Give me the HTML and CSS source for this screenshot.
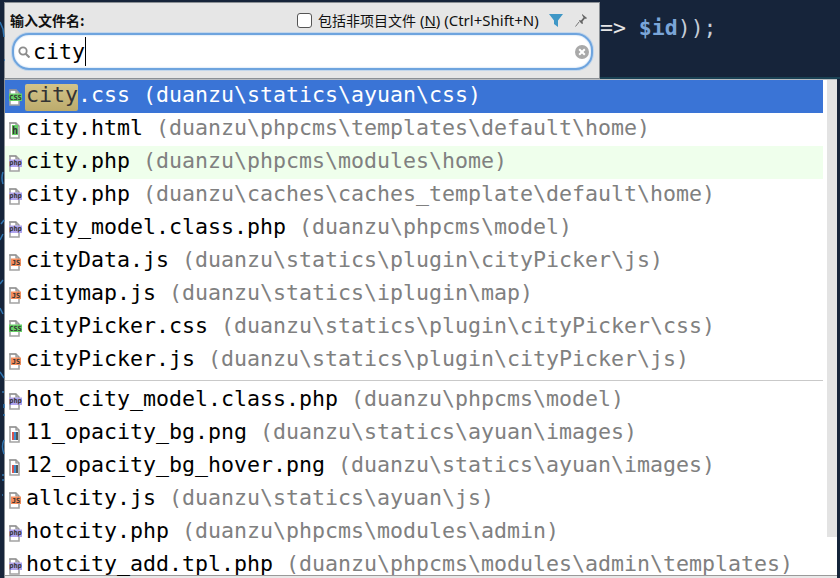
FILE: index.html
```html
<!DOCTYPE html>
<html lang="zh">
<head>
<meta charset="utf-8">
<title>输入文件名</title>
<link rel="stylesheet" href="styles.css">
</head>
<body>
<svg class="defs" width="0" height="0">
  <symbol id="page" viewBox="0 0 14 18"><path d="M1 2h6l3 3v12H1z" fill="#fff" stroke="#a3a3a3" stroke-width="1.600"/><path d="M.2 2h7M7 2v3h3" fill="none" stroke="#8b8b8b" stroke-width="1.200"/></symbol>
</svg>
<svg class="edge" width="5" height="578" viewBox="0 0 5 578"><path d="M0 22l3 7 1 8M4 60h1M3 172q-2 6 0 12M1 224l3-4M0 240l3-6M3 280l-3 4M0 308l3 6M0 372l4 6M2 392h2M4 404v4M4 414v2M4 440q-3 6 0 14M2 475h2M2 480h2M2 495h1" fill="none" stroke="#2f74b0" stroke-width="1.500"/></svg>
<div class="top">
  <div class="panel">
    <div class="panel-head">
      <span class="label">输入文件名:</span>
      <span class="check"></span>
      <span class="opt"><span class="cn">包括非项目文件</span> (<u>N</u>) (Ctrl+Shift+N)</span>
      <svg class="filter" width="14" height="13" viewBox="0 0 14 13"><path d="M0 0h14L9 6.500V13L5 10V6.500z" fill="#3f97c6"/></svg>
      <svg class="pin" width="12" height="13" viewBox="0 0 12 13"><path d="M7 0l5 4-1 1-1-.5-2.500 3 .5 2-1 .5-3-3 .5-1 1.500.5 2.500-3-1.500-2.500z" fill="#666"/><path d="M4 8l-3.500 4.500" stroke="#777" stroke-width="1"/></svg>
    </div>
    <div class="field">
      <svg class="lens" width="12" height="12" viewBox="0 0 12 12"><circle cx="5" cy="5" r="3.700" fill="none" stroke="#8c8c8c" stroke-width="1.800"/><path d="M7.500 7.500L11.500 11.500" stroke="#8c8c8c" stroke-width="2.200"/></svg>
      <span class="typed">city</span><span class="caret"></span>
      <svg class="clear" width="14" height="14" viewBox="0 0 14 14"><circle cx="7" cy="7" r="7" fill="#a9a9a9"/><path d="M4.200 4.200l5.600 5.600M9.800 4.200l-5.600 5.600" stroke="#fff" stroke-width="2"/></svg>
    </div>
  </div>
  <div class="code"><span class="op">=&gt;</span> <b class="var">$id</b><span class="paren">));</span></div>
</div>
<div class="popup">
  <div class="list">
    <div class="rows">
      <div class="row selected"><svg class="ico" viewBox="0 0 14 18"><use href="#page" width="14" height="18"/><rect class="g" y="5.500" width="13" height="7.500"/><text x="6.500" y="11.800" class="tag">CSS</text></svg><span class="name"><mark>city</mark>.css</span> <span class="path">(duanzu\statics\ayuan\css)</span></div>
      <div class="row"><svg class="ico" viewBox="0 0 14 18"><use href="#page" width="14" height="18"/><rect class="g" x="3" y="4" width="6" height="10"/><text x="6" y="12.500" class="tag big">h</text></svg><span class="name">city.html</span> <span class="path">(duanzu\phpcms\templates\default\home)</span></div>
      <div class="row tinted"><svg class="ico" viewBox="0 0 14 18"><use href="#page" width="14" height="18"/><rect class="v" y="5.500" width="13" height="7.500"/><text x="6.500" y="11.300" class="tag">php</text></svg><span class="name">city.php</span> <span class="path">(duanzu\phpcms\modules\home)</span></div>
      <div class="row"><svg class="ico" viewBox="0 0 14 18"><use href="#page" width="14" height="18"/><rect class="v" y="5.500" width="13" height="7.500"/><text x="6.500" y="11.300" class="tag">php</text></svg><span class="name">city.php</span> <span class="path">(duanzu\caches\caches_template\default\home)</span></div>
      <div class="row"><svg class="ico" viewBox="0 0 14 18"><use href="#page" width="14" height="18"/><rect class="v" y="5.500" width="13" height="7.500"/><text x="6.500" y="11.300" class="tag">php</text></svg><span class="name">city_model.class.php</span> <span class="path">(duanzu\phpcms\model)</span></div>
      <div class="row"><svg class="ico" viewBox="0 0 14 18"><use href="#page" width="14" height="18"/><rect class="o" x="2" y="5.500" width="10" height="7.500"/><text x="7" y="11.800" class="tag">JS</text></svg><span class="name">cityData.js</span> <span class="path">(duanzu\statics\plugin\cityPicker\js)</span></div>
      <div class="row"><svg class="ico" viewBox="0 0 14 18"><use href="#page" width="14" height="18"/><rect class="o" x="2" y="5.500" width="10" height="7.500"/><text x="7" y="11.800" class="tag">JS</text></svg><span class="name">citymap.js</span> <span class="path">(duanzu\statics\iplugin\map)</span></div>
      <div class="row"><svg class="ico" viewBox="0 0 14 18"><use href="#page" width="14" height="18"/><rect class="g" y="5.500" width="13" height="7.500"/><text x="6.500" y="11.800" class="tag">CSS</text></svg><span class="name">cityPicker.css</span> <span class="path">(duanzu\statics\plugin\cityPicker\css)</span></div>
      <div class="row"><svg class="ico" viewBox="0 0 14 18"><use href="#page" width="14" height="18"/><rect class="o" x="2" y="5.500" width="10" height="7.500"/><text x="7" y="11.800" class="tag">JS</text></svg><span class="name">cityPicker.js</span> <span class="path">(duanzu\statics\plugin\cityPicker\js)</span></div>
      <div class="sep"></div>
      <div class="row"><svg class="ico" viewBox="0 0 14 18"><use href="#page" width="14" height="18"/><rect class="v" y="5.500" width="13" height="7.500"/><text x="6.500" y="11.300" class="tag">php</text></svg><span class="name">hot_city_model.class.php</span> <span class="path">(duanzu\phpcms\model)</span></div>
      <div class="row"><svg class="ico" viewBox="0 0 14 18"><use href="#page" width="14" height="18"/><rect x="3" y="7" width="2" height="8" fill="#d9534f"/><rect x="5" y="7" width="2" height="8" fill="#3d8fd0"/><rect x="7" y="7" width="2" height="8" fill="#555"/></svg><span class="name">11_opacity_bg.png</span> <span class="path">(duanzu\statics\ayuan\images)</span></div>
      <div class="row"><svg class="ico" viewBox="0 0 14 18"><use href="#page" width="14" height="18"/><rect x="3" y="7" width="2" height="8" fill="#d9534f"/><rect x="5" y="7" width="2" height="8" fill="#3d8fd0"/><rect x="7" y="7" width="2" height="8" fill="#555"/></svg><span class="name">12_opacity_bg_hover.png</span> <span class="path">(duanzu\statics\ayuan\images)</span></div>
      <div class="row"><svg class="ico" viewBox="0 0 14 18"><use href="#page" width="14" height="18"/><rect class="o" x="2" y="5.500" width="10" height="7.500"/><text x="7" y="11.800" class="tag">JS</text></svg><span class="name">allcity.js</span> <span class="path">(duanzu\statics\ayuan\js)</span></div>
      <div class="row"><svg class="ico" viewBox="0 0 14 18"><use href="#page" width="14" height="18"/><rect class="v" y="5.500" width="13" height="7.500"/><text x="6.500" y="11.300" class="tag">php</text></svg><span class="name">hotcity.php</span> <span class="path">(duanzu\phpcms\modules\admin)</span></div>
      <div class="row"><svg class="ico" viewBox="0 0 14 18"><use href="#page" width="14" height="18"/><rect class="v" y="5.500" width="13" height="7.500"/><text x="6.500" y="11.300" class="tag">php</text></svg><span class="name">hotcity_add.tpl.php</span> <span class="path">(duanzu\phpcms\modules\admin\templates)</span></div>
    </div>
    <div class="scrollbar"></div>
  </div>
  <div class="foot"></div>
</div>
</body>
</html>
```
FILE: styles.css
```css
html, body { margin: 0; padding: 0; }
body {
  width: 840px; height: 578px; overflow: hidden;
  background: #16243a;
  font-family: "DejaVu Sans Mono", monospace;
}
.defs { position: absolute; }
.edge { position: absolute; left: 0; top: 0; }
.top { display: flex; height: 79px; padding-left: 4px; }

.panel {
  box-sizing: border-box; width: 596px; height: 77px; margin-top: 2px; flex: none;
  background: #e6e6e6; border: 1px solid #8b9095;
  display: flex; flex-direction: column; color: #111;
}
.panel-head {
  display: flex; align-items: center; height: 30px; flex: none; box-sizing: border-box;
  padding: 4px 0 0 5px;
}
.label { width: 287px; font: 700 14px "Noto Sans CJK SC", sans-serif; flex: none; }
.check {
  box-sizing: border-box; width: 15px; height: 15px; flex: none; margin-right: 6px;
  background: #fff; border: 1px solid #555; border-radius: 3px;
}
.opt {
  width: 231px; flex: none; white-space: nowrap;
  font: 15px "Noto Sans", "Noto Sans CJK SC", sans-serif;
}
.cn { font: 14px "Noto Sans CJK SC", sans-serif; }
.filter { margin-right: 12px; flex: none; }
.pin { flex: none; }
.field {
  box-sizing: border-box; height: 37px; margin: 0 6px 0 7px; flex: none;
  background: #fff; border: 2px solid #6ea4de; border-radius: 17px;
  box-shadow: 0 0 0 1px #c3d6ea, inset 0 0 2px #a8c8ec;
  display: flex; align-items: center; padding: 0 2px 0 4px;
}
.lens { margin-right: 3px; flex: none; }
.typed { font-size: 21.600px; color: #000; }
.caret { width: 1px; height: 29px; background: #000; }
.clear { margin-left: auto; flex: none; }

.code {
  flex: 1; box-sizing: border-box; height: 79px; padding-top: 14px;
  font-size: 21.500px; line-height: 28px; white-space: pre; color: #d8dee6;
  border-bottom: 2px solid #1a4254;
}
.op { color: #e6e6e6; }
.var { color: #7aa5d8; }
.paren { color: #c4ccd6; }

.popup {
  box-sizing: border-box; width: 833px; height: 499px; margin-left: 4px;
  background: #fff; border-top: 1px solid #b9bcc0; border-left: 1px solid #8b9095;
  display: flex; flex-direction: column;
}
.list { display: flex; height: 495px; flex: none; }
.foot { flex: 1; background: #e8e8e8; border-top: 1px solid #9a9a9a; }
.rows { width: 818px; flex: none; position: relative; z-index: 1; }
.scrollbar { width: 10px; height: 457px; margin-left: 4px; background: #e3e3e3; flex: none; }
.row {
  box-sizing: border-box; display: flex; align-items: center; height: 33px; padding-bottom: 4px;
  white-space: pre; font-size: 21.600px; color: #000;
}
.ico { width: 14px; height: 18px; margin: 4px 3px 0 4px; flex: none; }
.tag { font: 700 7px "DejaVu Sans Mono", monospace; text-anchor: middle; fill: #333; }
.big { font-size: 10px; }
.g { fill: #66d066; }
.v { fill: #b1a4ee; }
.o { fill: #f58d5c; }
.name::after { content: " "; }
.path { color: #808080; }
.selected { background: #3a74d6; color: #fff; }
.selected .path { color: #fff; }
.tinted { background: #efffec; }
.sep { height: 1px; margin: 3px 0; background: #c9c9c9; }
mark { position: relative; z-index: 0; background: none; color: #333; }
mark::before {
  content: ""; position: absolute; z-index: -1; left: -1px; right: 0; top: 2px; bottom: -4px;
  background: linear-gradient(#d2c48a, #bcab6c); border-radius: 2px;
}
```
